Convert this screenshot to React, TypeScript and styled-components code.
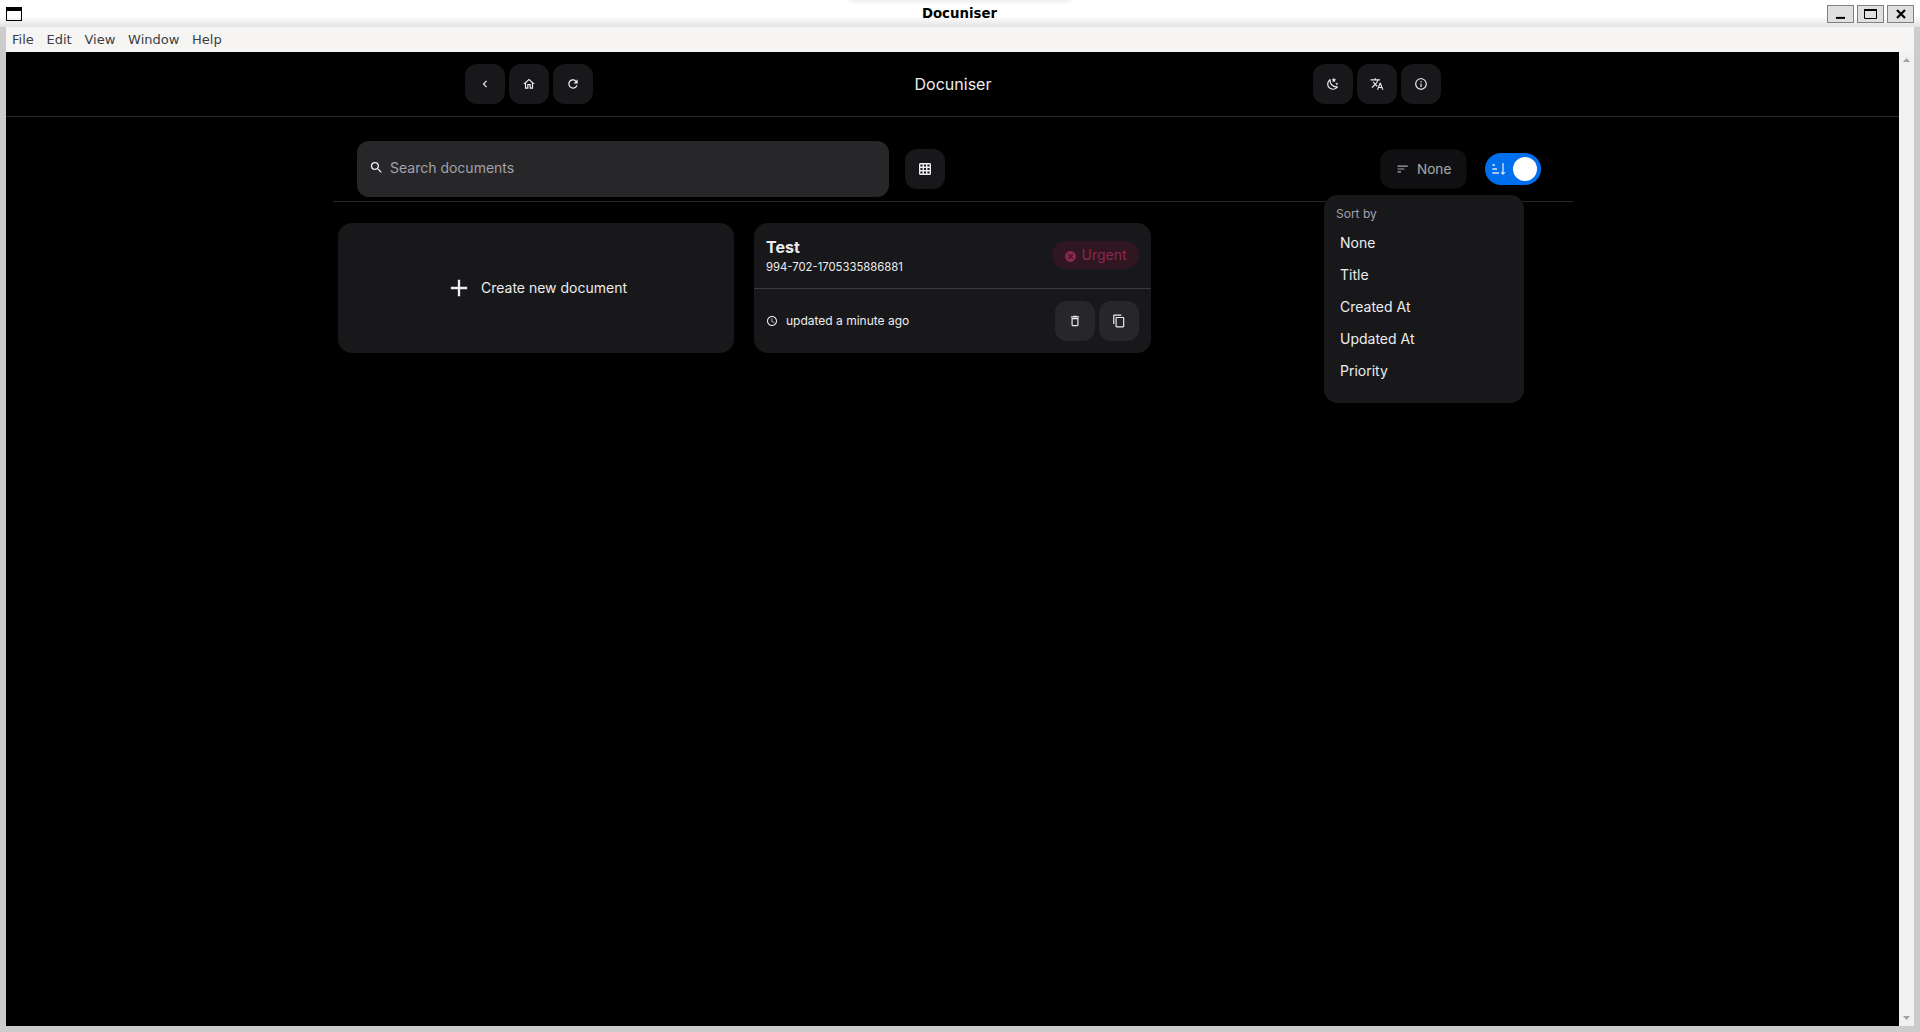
import React from "react";
import styled, { createGlobalStyle } from "styled-components";
import { MdChevronLeft, MdOutlineHome, MdRefresh, MdTranslate, MdInfoOutline, MdSearch, MdAdd, MdSort, MdAccessTime, MdDeleteOutline, MdContentCopy, MdCancel } from "react-icons/md";

const Global = createGlobalStyle`
  * { box-sizing: border-box; }
  body { margin: 0; background: #ccc; overflow: hidden; }
  button, input { font: inherit; color: inherit; border: 0; padding: 0; margin: 0; }
  svg { display: block; flex: none; }
`;

const Frame = styled.div`
  width: 1920px;
  height: 1032px;
  display: flex;
  flex-direction: column;
  background: #ccc;
`;
const TitleBar = styled.header`
  height: 27px;
  flex: none;
  display: grid;
  grid-template-columns: 1fr auto 1fr;
  padding: 0 7px 0 6px;
  background: linear-gradient(#fff 60%, #e2e2e2);
`;
const TitleText = styled.div`
  font: bold 13.33px/28px "DejaVu Sans", sans-serif;
  height: 27px;
  color: #000;
  position: relative;
`;
const TabShadow = styled.div`
  position: absolute;
  top: -11px;
  left: -73px;
  width: 222px;
  height: 10px;
  border-radius: 8px;
  box-shadow: 0 0 7px rgba(0, 0, 0, 0.2);
`;
const WindowGlyph = styled.div`
  width: 16px;
  height: 14px;
  margin-top: 7px;
  border: 1px solid #000;
  border-top-width: 4px;
`;
const Controls = styled.div`
  display: flex;
  justify-content: flex-end;
  gap: 3px;
  padding-top: 5px;
  margin-right: -1px;
`;
const Control = styled.button`
  width: 27px;
  height: 18px;
  background: #e0e0e0;
  border: 1px solid #808080;
  display: grid;
  place-items: center;
`;
const MenuBar = styled.nav`
  height: 25px;
  flex: none;
  margin: 0 6px;
  padding-left: 6px;
  display: flex;
  gap: 12.75px;
  background: #f6f5f4;
  font: 13px/26px "DejaVu Sans", sans-serif;
  color: #3b4043;
`;
const Body = styled.div`
  flex: none;
  height: 974px;
  margin: 0 6px;
  display: flex;
`;
const Page = styled.main`
  flex: 1;
  background: #000;
  color: #ecedee;
  font-family: Inter, sans-serif;
  font-size: 14px;
`;
const Scrollbar = styled.div`
  width: 15px;
  background: #f1f1f1;
  display: flex;
  flex-direction: column;
  justify-content: space-between;
  align-items: center;
  padding: 6px 0;
`;
const Header = styled.div`
  height: 65px;
  border-bottom: 1px solid #262626;
`;
const HeaderInner = styled.div`
  width: 976px;
  height: 64px;
  margin: 0 0 0 459px;
  display: grid;
  grid-template-columns: 1fr auto 1fr;
  align-items: center;
`;
const Brand = styled.div`
  font-size: 16px;
  line-height: 24px;
`;
const Group = styled.div<{ $end?: boolean }>`
  display: flex;
  gap: 4px;
  justify-content: ${(p) => (p.$end ? "flex-end" : "flex-start")};
`;
const IconButton = styled.button<{ $raised?: boolean }>`
  width: 40px;
  height: 40px;
  flex: none;
  border-radius: 12px;
  background: ${(p) => (p.$raised ? "#27272a" : "#18181b")};
  display: grid;
  place-items: center;
`;
const Content = styled.section`
  width: 1240px;
  margin: 0 0 0 327px;
  position: relative;
`;
const Toolbar = styled.div`
  height: 85px;
  padding: 24px 32px 4px 24px;
  display: flex;
  align-items: center;
  border-bottom: 1px solid #262626;
`;
const Search = styled.label`
  width: 532px;
  height: 56px;
  margin-right: 16px;
  padding: 0 12px 3px;
  border-radius: 12px;
  background: #27272a;
  display: flex;
  align-items: center;
  gap: 6px;
`;
const SearchInput = styled.input`
  flex: 1;
  background: transparent;
  outline: none;
  line-height: 20px;
  &::placeholder { color: #a1a1aa; opacity: 1; }
`;
const SortButton = styled.button`
  width: 89px;
  height: 40px;
  margin-left: auto;
  margin-right: 17px;
  padding-bottom: 1px;
  border-radius: 12px;
  background: #18181b;
  display: flex;
  align-items: center;
  justify-content: center;
  gap: 8px;
  opacity: 0.7;
  transform: scale(0.97);
`;
const Switch = styled.button`
  width: 56px;
  height: 32px;
  padding: 0 4px 0 6px;
  border-radius: 16px;
  background: #006fee;
  display: flex;
  align-items: center;
  justify-content: space-between;
`;
const Thumb = styled.span`
  width: 24px;
  height: 24px;
  border-radius: 50%;
  background: #fff;
`;
const Cards = styled.div`
  padding: 21px 5px;
  display: grid;
  grid-template-columns: 396px 397px;
  gap: 20px;
`;
const Card = styled.article`
  height: 130px;
  border-radius: 14px;
  background: #18181b;
`;
const CreateCard = styled(Card)`
  display: flex;
  align-items: center;
  justify-content: center;
  gap: 8px;
  padding-bottom: 1px;
`;
const CardTop = styled.div`
  height: 66px;
  padding: 0 12px 2px;
  display: flex;
  align-items: center;
  justify-content: space-between;
  border-bottom: 1px solid #3a3a3c;
`;
const CardBottom = styled.div`
  height: 64px;
  padding: 0 12px;
  display: flex;
  align-items: center;
  justify-content: space-between;
`;
const DocTitle = styled.div`
  font-size: 16px;
  line-height: 24px;
  font-weight: 700;
`;
const DocId = styled.div`
  font-size: 11.3px;
  line-height: 16px;
`;
const Updated = styled.div`
  display: flex;
  align-items: center;
  gap: 8px;
  font-size: 12px;
  line-height: 16px;
  padding-bottom: 1px;
`;
const Urgent = styled.div`
  width: 87px;
  height: 28px;
  border-radius: 14px;
  background: #301621;
  color: #8c2850;
  display: flex;
  align-items: center;
  justify-content: center;
  gap: 4px;
  line-height: 28px;
`;
const Dot = styled.span`
  padding-top: 4px;
`;
const Popover = styled.div`
  position: absolute;
  top: 78px;
  left: 991px;
  width: 200px;
  height: 208px;
  padding: 12px 12px;
  border-radius: 14px;
  background: #18181b;
`;
const PopTitle = styled.div`
  font-size: 12px;
  line-height: 14px;
  height: 20px;
  color: #a1a1aa;
`;
const Option = styled.div`
  height: 32px;
  padding-left: 4px;
  line-height: 32px;
`;

const Moon = () => (
  <svg width="14" height="14" viewBox="0 0 24 24" fill="currentColor">
    <path d="M17.75,4.09L15.22,6.03L16.13,9.09L13.5,7.28L10.87,9.09L11.78,6.03L9.25,4.09L12.44,4L13.5,1L14.56,4L17.75,4.09M21.25,11L19.61,12.25L20.2,14.23L18.5,13.06L16.8,14.23L17.39,12.25L15.75,11L17.81,10.95L18.5,9L19.19,10.95L21.25,11M18.97,15.95C19.8,15.87 20.69,17.05 20.16,17.8C19.84,18.25 19.5,18.67 19.08,19.07C15.17,23 8.84,23 4.94,19.07C1.03,15.17 1.03,8.83 4.94,4.93C5.34,4.53 5.76,4.17 6.21,3.85C6.96,3.32 8.14,4.21 8.06,5.04C7.79,7.9 8.75,10.87 10.95,13.06C13.14,15.26 16.1,16.22 18.97,15.95M17.33,17.97C14.5,17.81 11.7,16.64 9.53,14.5C7.36,12.31 6.2,9.5 6.04,6.68C3.23,9.82 3.34,14.64 6.35,17.66C9.37,20.67 14.19,20.78 17.33,17.97Z" />
  </svg>
);
const GridIcon = () => (
  <svg width="12" height="12" viewBox="0 0 12 12" fill="none" stroke="currentColor" strokeWidth="1.4">
    <rect x=".7" y=".7" width="10.6" height="10.6" rx=".6" />
    <path d="M4.25 1v10M7.75 1v10M1 4.25h10M1 7.75h10" />
  </svg>
);
const SortAscending = () => (
  <svg width="16" height="16" viewBox="0 0 24 24" fill="#d4e5fb">
    <path d="M19 17H22L18 21L14 17H17V3H19V17M2 17H12V19H2V17M6 5V7H2V5H6M2 11H9V13H2V11Z" />
  </svg>
);
const Arrow = ({ down }: { down?: boolean }) => (
  <svg width="7" height="4" viewBox="0 0 7 4" fill="#a3a3a3">
    <path d={down ? "M0 0H7L3.5 4Z" : "M0 4H7L3.5 0Z"} />
  </svg>
);

const menus = ["File", "Edit", "View", "Window", "Help"];
const options = ["None", "Title", "Created At", "Updated At", "Priority"];

export default function App() {
  return (
    <>
      <Global />
      <Frame>
        <TitleBar>
          <WindowGlyph />
          <TitleText>
            <TabShadow />
            Docuniser
          </TitleText>
          <Controls>
            <Control><svg width="13" height="12"><path d="M2 9.9h9" stroke="#000" strokeWidth="2" /></svg></Control>
            <Control><svg width="13" height="10"><path d="M.5 0v9.5h12V0M0 1h13" stroke="#000" fill="none" /><path d="M0 1h13" stroke="#000" strokeWidth="2" /></svg></Control>
            <Control><svg width="10" height="10"><path d="M1 1l8 8M9 1l-8 8" stroke="#000" strokeWidth="2.2" /></svg></Control>
          </Controls>
        </TitleBar>
        <MenuBar>{menus.map((m) => <span key={m}>{m}</span>)}</MenuBar>
        <Body>
          <Page>
            <Header>
              <HeaderInner>
                <Group>
                  <IconButton><MdChevronLeft size={14} /></IconButton>
                  <IconButton><MdOutlineHome size={14} /></IconButton>
                  <IconButton><MdRefresh size={14} /></IconButton>
                </Group>
                <Brand>Docuniser</Brand>
                <Group $end>
                  <IconButton><Moon /></IconButton>
                  <IconButton><MdTranslate size={14} /></IconButton>
                  <IconButton><MdInfoOutline size={14} /></IconButton>
                </Group>
              </HeaderInner>
            </Header>
            <Content>
              <Toolbar>
                <Search>
                  <MdSearch size={15} />
                  <SearchInput placeholder="Search documents" />
                </Search>
                <IconButton><GridIcon /></IconButton>
                <SortButton><MdSort size={14} />None</SortButton>
                <Switch><SortAscending /><Thumb /></Switch>
              </Toolbar>
              <Cards>
                <CreateCard><MdAdd size={28} />Create new document</CreateCard>
                <Card>
                  <CardTop>
                    <div>
                      <DocTitle>Test</DocTitle>
                      <DocId>994-702-1705335886881</DocId>
                    </div>
                    <Urgent><Dot><MdCancel size={13} /></Dot>Urgent</Urgent>
                  </CardTop>
                  <CardBottom>
                    <Updated><MdAccessTime size={12} />updated a minute ago</Updated>
                    <Group>
                      <IconButton $raised><MdDeleteOutline size={14} /></IconButton>
                      <IconButton $raised><MdContentCopy size={14} /></IconButton>
                    </Group>
                  </CardBottom>
                </Card>
              </Cards>
              <Popover>
                <PopTitle>Sort by</PopTitle>
                {options.map((o) => <Option key={o}>{o}</Option>)}
              </Popover>
            </Content>
          </Page>
          <Scrollbar><Arrow /><Arrow down /></Scrollbar>
        </Body>
      </Frame>
    </>
  );
}
